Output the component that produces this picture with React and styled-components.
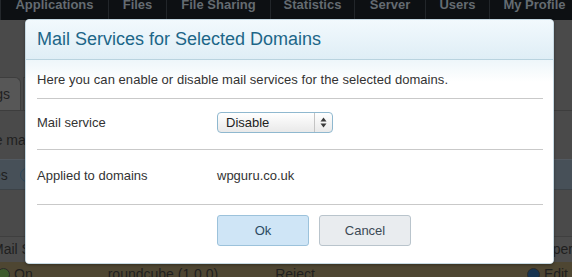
import * as React from 'react'
import styled, { createGlobalStyle } from 'styled-components'

const GlobalStyle = createGlobalStyle`
  html, body {
    margin: 0;
    padding: 0;
    background: #474747;
  }
  body {
    font-family: 'Liberation Sans', Arial, sans-serif;
  }
`

const tabs = [
  { label: 'Applications', width: 108 },
  { label: 'Files', width: 58 },
  { label: 'File Sharing', width: 104 },
  { label: 'Statistics', width: 84 },
  { label: 'Server', width: 71 },
  { label: 'Users', width: 64 },
  { label: 'My Profile', width: 90 }
]

export default function App () {
  return (
    <Screen>
      <GlobalStyle />
      <Backdrop>
        <TopNav>
          <NavEdge />
          <NavTabs>
            {tabs.map(t => (
              <NavTab key={t.label} style={{ width: t.width }}>{t.label}</NavTab>
            ))}
          </NavTabs>
        </TopNav>
        <PageBody>
          <SubTabs>
            <SubTab><span>Settings</span></SubTab>
            <SubTab $next />
          </SubTabs>
          <Hint>Here you can see the mail</Hint>
          <ToolRow>
            <span>Services</span>
            <Ring />
          </ToolRow>
          <Spacer />
          <HeadRow>
            <span>Mail Service</span>
            <span>Upper</span>
          </HeadRow>
          <DataRow>
            <span><Dot $green />On</span>
            <span className='app'>roundcube (1.0.0)</span>
            <span className='rej'>Reject</span>
            <span className='edit'><Dot />Edit</span>
          </DataRow>
        </PageBody>
      </Backdrop>

      <Modal>
        <ModalHeader>Mail Services for Selected Domains</ModalHeader>
        <ModalBody>
          <Intro>Here you can enable or disable mail services for the selected domains.</Intro>
          <Field $height={51} $pad={4}>
            <Label>Mail service</Label>
            <Select>
              <span className='value'>Disable</span>
              <span className='arrows'>
                <svg width='7' height='11' viewBox='0 0 7 11'>
                  <path d='M3.5 0.5 L6.5 4.5 L0.5 4.5 Z' fill='#3a3a3a' />
                  <path d='M3.5 10.5 L6.5 6.5 L0.5 6.5 Z' fill='#3a3a3a' />
                </svg>
              </span>
            </Select>
          </Field>
          <Field $height={55} $pad={3}>
            <Label>Applied to domains</Label>
            <Value>wpguru.co.uk</Value>
          </Field>
          <Actions>
            <Button $primary>Ok</Button>
            <Button>Cancel</Button>
          </Actions>
        </ModalBody>
      </Modal>
    </Screen>
  )
}

const Screen = styled.div`
  position: relative;
  width: 572px;
  height: 277px;
  overflow: hidden;
`

const Backdrop = styled.div`
  display: flex;
  flex-direction: column;
  height: 100%;
  background: #4a4a4a;
`

const TopNav = styled.div`
  display: flex;
  height: 20px;
  flex-shrink: 0;
`

const NavEdge = styled.div`
  width: 16px;
  background: linear-gradient(90deg, #1a1c1e 0 2px, #3d3d3d 2px);
`

const NavTabs = styled.div`
  display: flex;
  flex: 1;
  background: #0d1013;
  border-left: 1px solid #24282c;
`

const NavTab = styled.div`
  flex-shrink: 0;
  height: 20px;
  border-right: 1px solid #22262a;
  box-sizing: border-box;
  color: #646b71;
  font-weight: bold;
  font-size: 13px;
  line-height: 9px;
  text-align: center;
  white-space: nowrap;
  overflow: hidden;
`

const PageBody = styled.div`
  display: flex;
  flex-direction: column;
  flex: 1;
  color: #1f1f1f;
  font-size: 14px;
`

const SubTabs = styled.div`
  display: flex;
  gap: 2px;
  margin-top: 57px;
  height: 33px;
  border-bottom: 1px solid #3d3d3d;
  margin-left: -30px;
`

const SubTab = styled.div`
  box-sizing: border-box;
  width: ${p => p.$next ? '60px' : '51px'};
  background: ${p => p.$next ? '#4e4e4e' : '#575757'};
  border: 1px solid #3e3e3e;
  border-bottom: none;
  border-radius: 0 6px 0 0;
  display: flex;
  justify-content: flex-end;
  align-items: center;
  padding-right: 10px;
  white-space: nowrap;
  overflow: hidden;
`

const Hint = styled.div`
  display: flex;
  justify-content: flex-end;
  width: 32px;
  overflow: hidden;
  margin-top: 21px;
  white-space: nowrap;
  line-height: 17px;
`

const ToolRow = styled.div`
  margin-top: 10px;
  height: 29px;
  background: #475058;
  border-top: 1px solid #525960;
  border-bottom: 1px solid #3c4247;
  display: flex;
  align-items: center;
  gap: 12px;
  margin-left: -46px;
`

const Ring = styled.i`
  width: 12px;
  height: 12px;
  border-radius: 50%;
  border: 1px solid #2e4a5e;
`

const Spacer = styled.div`
  flex: 1;
`

const HeadRow = styled.div`
  height: 26px;
  border-top: 1px solid #3f3f3f;
  background: #4c4c4c;
  display: flex;
  justify-content: space-between;
  align-items: center;
  padding-bottom: 2px;
  box-sizing: border-box;
  margin-left: -8px;
  margin-right: -1px;
`

const DataRow = styled.div`
  height: 15px;
  background: #4e4632;
  display: flex;
  align-items: flex-start;
  line-height: 17px;
  padding-top: 4px;
  margin-bottom: -4px;
  > span { display: flex; align-items: center; gap: 4px; }
  > .app { margin-left: 75px; }
  > .rej { margin-left: 57px; }
  > .edit { margin-left: auto; margin-right: 4px; }
`

const Dot = styled.i`
  display: inline-block;
  width: 11px;
  height: 11px;
  border-radius: 50%;
  margin-left: -3px;
  background: ${p => p.$green ? '#3d5a2c' : '#17334f'};
  border: 1px solid #2a2a2a;
`

const Modal = styled.div`
  position: absolute;
  left: 25px;
  top: 19px;
  width: 529px;
  height: 245px;
  box-sizing: border-box;
  background: #ffffff;
  border: 1px solid #c6d9e3;
  border-radius: 4px;
  box-shadow: 0 1px 3px rgba(0, 0, 0, 0.35);
  display: flex;
  flex-direction: column;
  overflow: hidden;
  font-family: 'Liberation Sans', Arial, sans-serif;
`

const ModalHeader = styled.div`
  height: 40px;
  flex-shrink: 0;
  box-sizing: border-box;
  padding: 0 11px;
  display: flex;
  align-items: center;
  background: linear-gradient(180deg, #f2f9fd 0%, #dfeef6 100%);
  border-bottom: 1px solid #b9d3df;
  color: #1c6688;
  font-size: 18px;
`

const ModalBody = styled.div`
  flex: 1;
  padding: 0 10px 0 11px;
  background: linear-gradient(180deg, #eef6fa 0px, #ffffff 22px);
  display: flex;
  flex-direction: column;
`

const Intro = styled.div`
  height: 39px;
  box-sizing: border-box;
  display: flex;
  align-items: center;
  border-bottom: 1px solid #c9c9c9;
  color: #333;
  font-size: 13px;
  letter-spacing: 0.05px;
`

const Field = styled.div`
  height: ${p => p.$height}px;
  box-sizing: border-box;
  padding-bottom: ${p => p.$pad}px;
  display: flex;
  align-items: center;
  border-bottom: 1px solid #c9c9c9;
  color: #333;
  font-size: 13px;
`

const Label = styled.div`
  width: 180px;
  flex-shrink: 0;
`

const Value = styled.div``

const Select = styled.div`
  width: 116px;
  height: 21px;
  box-sizing: border-box;
  display: flex;
  border: 1px solid #8fb8cf;
  border-radius: 4px;
  background: linear-gradient(180deg, #ffffff 0%, #e9e9e9 100%);
  > .value {
    flex: 1;
    padding-left: 8px;
    line-height: 19px;
    color: #222;
  }
  > .arrows {
    width: 17px;
    border-left: 1px solid #c4c4c4;
    display: flex;
    align-items: center;
    justify-content: center;
  }
`

const Actions = styled.div`
  display: flex;
  gap: 10px;
  padding-left: 180px;
  padding-top: 10px;
`

const Button = styled.div`
  width: 92px;
  height: 31px;
  box-sizing: border-box;
  display: flex;
  align-items: center;
  justify-content: center;
  border-radius: 3px;
  font-size: 13px;
  border: 1px solid ${p => p.$primary ? '#9cc2db' : '#b9c4cc'};
  background: ${p => p.$primary ? '#cfe5f6' : '#e9ecef'};
  color: ${p => p.$primary ? '#2a4a63' : '#3c4a55'};
`
